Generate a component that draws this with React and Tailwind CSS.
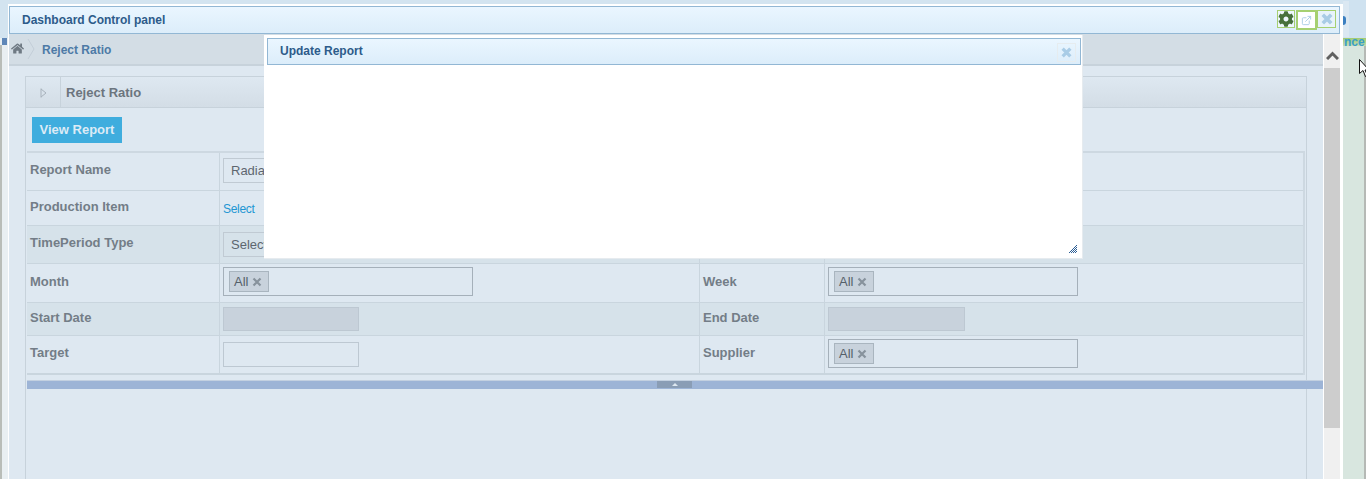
import { FaCog, FaHome } from "react-icons/fa";
import { ExternalLink } from "lucide-react";

const XMark = ({ size = 10, width = 2.6, className = "" }) => (
  <svg width={size} height={size} viewBox="0 0 10 10" className={className}>
    <path d="M1.500 1.500l7 7M8.500 1.500l-7 7" fill="none" stroke="currentColor" strokeWidth={width} />
  </svg>
);

const Tag = () => (
  <span className="inline-flex items-center gap-[4px] h-[21px] pl-[4px] pr-[6px] bg-[#c8d2dc] border border-[#a9b5bf] text-[13px] text-[#55606a]">
    All
    <XMark width={2.2} className="text-[#87929c]" />
  </span>
);

const TagBox = () => (
  <div className="w-[250px] h-[29px] border border-[#a5b0ba] flex items-center pl-[5px]">
    <Tag />
  </div>
);

const Label = ({ children, className = "" }) => (
  <div className={`flex items-center font-bold text-[13px] text-[#737d87] pl-[3px] border-r border-[#c9d5de] ${className}`}>{children}</div>
);

const Row = ({ h, dark, children }) => (
  <div className={`grid grid-cols-[193px_480px_125px_1fr] border-b border-[#c9d5de] last:border-b-2 ${h} ${dark ? "bg-[#d6e2ea]" : ""}`}>
    {children}
  </div>
);

const Cell = ({ children, className = "" }) => (
  <div className={`flex items-center pl-[3px] border-r border-[#c9d5de] last:border-r-0 ${className}`}>{children}</div>
);

const TextBox = ({ children }) => (
  <div className="w-[100px] h-[25px] border border-[#c0cad3] flex items-center pl-[7px] text-[13px] text-[#5d666f]">{children}</div>
);

// dithered corner grip of the modal
const gripPixels = [];
for (let y = 0; y < 8; y++) {
  for (let x = 0; x < 8; x++) {
    if (x + y >= 7 && (x + y) % 2 === 1) gripPixels.push([x, y]);
  }
}

export default function App() {
  return (
    <div className="relative h-[479px] w-[1366px] overflow-hidden flex font-['Liberation_Sans',Arial,sans-serif] bg-[#d3e4f0]">
      {/* left strip behind the dialog */}
      <div className="w-[8px] flex flex-col bg-[#e9eff2]">
        <div className="h-[38px] bg-[#d3e4f0]" />
        <div className="h-[7px] w-[5px] ml-[2px] bg-[#5f87b8]" />
        <div className="flex-1 border-l-2 border-[#b9bdb8]" />
      </div>

      {/* main dialog */}
      <div className="w-[1335px] shrink-0 mt-[4px] bg-white pl-[1px] pr-[3px] pt-[2px] flex flex-col">
        <div className="h-[28px] shrink-0 flex justify-between border border-[#92b7d4] bg-gradient-to-b from-[#eaf6ff] to-[#dcedfa] pl-[12px] pr-[3px]">
          <span className="self-center font-bold text-[12px] text-[#2d5b8a]">Dashboard Control panel</span>
          <div className="flex items-start pt-[3px]">
            <div className="w-[18px] h-[18px] border border-[#a6d071] bg-[#eef6fc] flex items-center justify-center">
              <FaCog size={16} className="text-[#47703a]" />
            </div>
            <div className="w-[21px] h-[20px] ml-[1px] border-2 border-[#a6d071] bg-white flex items-center justify-center">
              <ExternalLink size={11} className="text-[#a9cce6]" />
            </div>
            <div className="w-[19px] h-[18px] border border-[#a6d071] bg-[#e8f3fb] flex items-center justify-center">
              <XMark size={12} width={3} className="text-[#a9cce6]" />
            </div>
          </div>
        </div>

        <div className="flex flex-1 min-h-0">
          <div className="w-[1314px] shrink-0 bg-[#dee8f1] flex flex-col">
            {/* breadcrumb */}
            <div className="h-[32px] shrink-0 flex items-center bg-[#d3dde5] border-b-2 border-[#c7d2db]">
              <FaHome size={13} className="ml-[2px] mb-[2px] text-[#6f7a84]" />
              <svg width="8" height="22" viewBox="0 0 8 22" className="ml-[3px]">
                <path d="M1 1l6 10-6 10" fill="none" stroke="#c3ced8" />
              </svg>
              <span className="ml-[7px] pt-[2px] font-bold text-[12px] text-[#4d7aa6]">Reject Ratio</span>
            </div>

            {/* panel */}
            <div className="relative flex-1 ml-[16px] mr-[16px] mt-[10px] border-x border-t border-[#c7d2db]">
              <div className="h-[31px] flex items-center border-b border-[#c7d2db] bg-gradient-to-b from-[#dee8f1] to-[#d3dde6]">
                <div className="w-[35px] h-[32px] pt-[2px] border-r border-[#c7d2db] flex items-center justify-center">
                  <svg width="7" height="10" viewBox="0 0 7 10">
                    <path d="M1 .5v9M1 1l5 4-5 4" fill="none" stroke="#a8b2bc" />
                  </svg>
                </div>
                <span className="ml-[5px] pt-[1px] font-bold text-[13px] text-[#6c757e]">Reject Ratio</span>
              </div>

              <div className="px-[6px] pt-[9px]">
                <button className="block w-[90px] h-[26px] bg-[#3fadde] text-[#dcebf6] font-bold text-[13px]">View Report</button>
              </div>

              <div className="mt-[8px] ml-[1px] mr-[1px] border-t-2 border-r-2 border-[#cdd8e1]">
                <Row h="h-[38px]">
                  <Label className="pb-[3px]">Report Name</Label>
                  <Cell className="pb-[2px]"><TextBox>Radial</TextBox></Cell>
                  <Cell />
                  <Cell />
                </Row>
                <Row h="h-[35px]">
                  <Label className="pb-[2px]">Production Item</Label>
                  <Cell><span className="text-[12px] tracking-[-0.3px] text-[#2196d3] mt-[2px]">Select</span></Cell>
                  <Cell />
                  <Cell />
                </Row>
                <Row h="h-[38px]" dark>
                  <Label className="pb-[3px]">TimePeriod Type</Label>
                  <Cell><TextBox>Select</TextBox></Cell>
                  <Cell />
                  <Cell />
                </Row>
                <Row h="h-[39px]">
                  <Label className="pb-[3px]">Month</Label>
                  <Cell className="pb-[3px]"><TagBox /></Cell>
                  <Label className="pb-[3px]">Week</Label>
                  <Cell className="pb-[3px]"><TagBox /></Cell>
                </Row>
                <Row h="h-[33px]" dark>
                  <Label className="pb-[3px]">Start Date</Label>
                  <Cell><div className="w-[136px] h-[24px] bg-[#c8d2dc] border border-[#bdc8d2]" /></Cell>
                  <Label className="pb-[3px]">End Date</Label>
                  <Cell><div className="w-[137px] h-[24px] bg-[#c8d2dc] border border-[#bdc8d2]" /></Cell>
                </Row>
                <Row h="h-[39px]">
                  <Label className="pb-[3px]">Target</Label>
                  <Cell><div className="w-[136px] h-[25px] border border-[#bdc8d2]" /></Cell>
                  <Label className="pb-[3px]">Supplier</Label>
                  <Cell className="pb-[2px]"><TagBox /></Cell>
                </Row>
              </div>

              {/* splitter runs past the panel edge */}
              <div className="relative mt-[5px] ml-[1px] mr-[-17px] h-[9px] bg-[#9db4d6] border-t border-[#c3d0e0]">
                <div className="absolute left-[630px] top-0 w-[35px] h-[7px] bg-[#8a9db5] flex items-center justify-center">
                  <div className="w-0 h-0 border-x-[3px] border-x-transparent border-b-[3px] border-b-[#dee8f1]" />
                </div>
              </div>
            </div>
          </div>

          {/* scrollbar */}
          <div className="w-[16px] ml-[1px] bg-[#f0f0f0] flex flex-col">
            <div className="h-[34px] shrink-0 flex justify-center pt-[17px]">
              <svg width="13" height="9" viewBox="0 0 13 9">
                <path d="M1 8l5.500-5.500L12 8" fill="none" stroke="#606060" strokeWidth="3" />
              </svg>
            </div>
            <div className="h-[360px] bg-[#cdcdcd]" />
          </div>
        </div>
      </div>

      {/* right strip behind the dialog */}
      <div className="flex-1 flex flex-col">
        <div className="h-[38px] flex bg-[#cfe2f0]">
          <div className="w-[6px] mt-[1px] mb-[1px] bg-[#dbe8f2] flex items-center">
            <div className="w-[3px] h-[9px] mt-[2px] rounded-r-full bg-[#3b7fc0]" />
          </div>
        </div>
        <div className="h-[8px] bg-gradient-to-b from-[#a2cb70] to-[#c7dcb4] text-[12px] leading-[8px] font-bold text-[#3a9fc8] pl-[1px]">nce</div>
        <div className="flex-1 bg-[#d8e6df] border-r-2 border-[#b5b9b5]" />
      </div>

      {/* mouse pointer */}
      <svg width="10" height="18" viewBox="0 0 10 18" className="absolute left-[1359px] top-[59px]">
        <path d="M.5.5v14l3.500-3 2.500 6 2-1-2.500-5.500h4z" fill="#fff" stroke="#111" />
      </svg>

      {/* Update Report modal */}
      <div className="absolute left-[264px] top-[35px] w-[819px] h-[224px] bg-white border-r border-b border-[#e6ebef] pl-[3px] pr-[1px] pt-[3px]">
        <div className="h-[27px] flex items-center justify-between border border-[#92b7d4] bg-gradient-to-b from-[#eaf6ff] to-[#dcedfa] pl-[12px] pr-[4px]">
          <span className="font-bold text-[12px] text-[#2d5b8a] mb-[2px]">Update Report</span>
          <div className="w-[19px] h-[19px] mt-[2px] border border-[#e6ecef] flex items-center justify-center">
            <XMark size={11} width={3} className="text-[#a9cce6]" />
          </div>
        </div>
        <svg width="8" height="8" viewBox="0 0 8 8" shapeRendering="crispEdges" className="absolute right-[5px] bottom-[5px]">
          {gripPixels.map(([x, y]) => (
            <rect key={`${x}-${y}`} x={x} y={y} width="1" height="1" fill="#2d5f96" />
          ))}
        </svg>
      </div>
    </div>
  );
}
